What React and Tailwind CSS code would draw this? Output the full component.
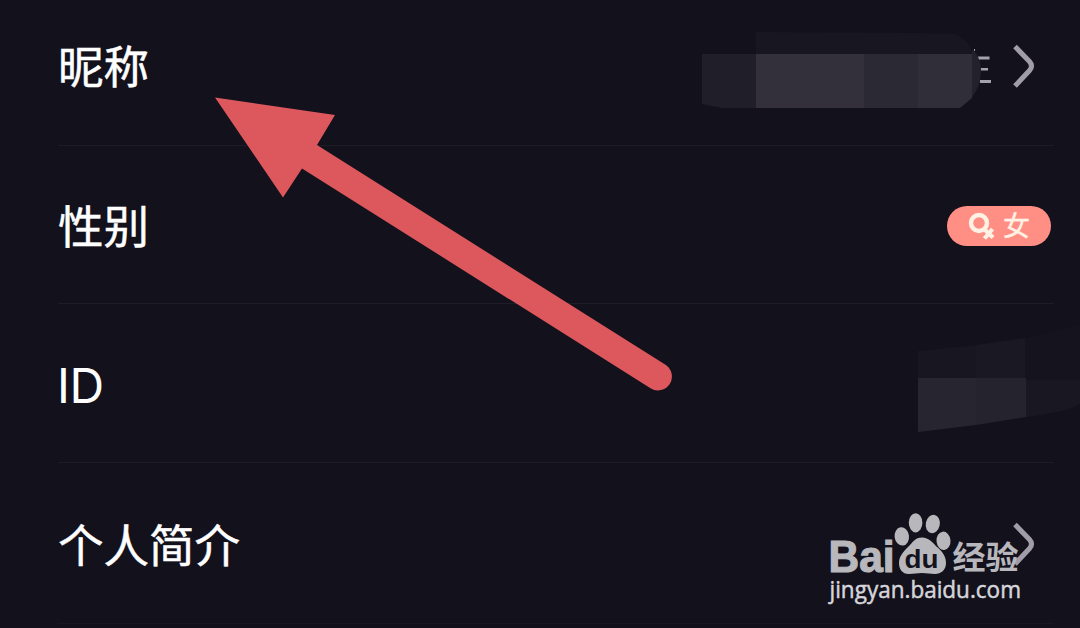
import React from 'react';

const Chevron = () => (
  <svg className="block w-6 h-12 shrink-0" viewBox="0 0 24 48" fill="none">
    <path
      d="M4 3.5L18.5 18.5Q22.5 23 18.5 27.5L4 43"
      stroke="#a09da8"
      strokeWidth="5"
    />
  </svg>
);

// blurred-out nickname, only the last strokes stay readable
const HiddenName = () => (
  <svg className="block w-[296px] h-[78px] shrink-0" viewBox="700 31 296 78">
    <path d="M756 32L918 33L954 34Q968 38 973 54H756Z" fill="#181621" />
    <path d="M702 54H756V108H722L702 104Z" fill="#201f29" />
    <path d="M756 54H864V108H756Z" fill="#33303b" />
    <path d="M864 54H918V108H864Z" fill="#2b2934" />
    <path d="M918 54H972V98L960 108H918Z" fill="#302e38" />
    <path d="M972 50Q981 55 981 72Q980 88 972 97Z" fill="#23212b" />
    <path d="M978 56.5h11.5v3H979zM981 68h7v2.6h-7zM980 80h11v3h-11z" fill="#a5a2ad" />
    <path d="M974 49h1v2h-1z" fill="#a5a2ad" />
  </svg>
);

const HiddenId = () => (
  <svg className="block w-[162px] h-[112px] shrink-0" viewBox="918 322 162 112">
    <path d="M918 351L976 345V378H918Z" fill="#181621" />
    <path d="M976 345L1025 338V378H976Z" fill="#1a1823" />
    <path d="M1025 338L1080 324V380H1025Z" fill="#15131e" />
    <path d="M918 378H976V425L918 432Z" fill="#272530" />
    <path d="M976 378H1026V417L976 425Z" fill="#25232e" />
    <path d="M1026 380H1080V404Q1068 412 1026 417Z" fill="#191721" />
  </svg>
);

const GenderBadge = () => (
  <div className="flex items-center w-[104px] h-10 rounded-full bg-[#ff8e84] pl-[20px] gap-2 text-[#fff1e4]">
    <svg className="block w-7 h-7 shrink-0" viewBox="0 0 28 28" fill="none" stroke="currentColor">
      <circle cx="12" cy="11" r="8" strokeWidth="4.4" />
      <path d="M17 17L26 25.5M25.5 17L17.5 26.5" strokeWidth="4.2" />
    </svg>
    <span className="pb-[3px] text-[27px] leading-[36px] [-webkit-text-stroke:0.4px]">女</span>
  </div>
);

const Row = ({ label, className, children }) => (
  <div className={`flex items-center justify-between ml-[58px] mr-[26px] ${className}`}>
    <span className="pb-[5px] text-[45.5px] leading-[60px] text-white whitespace-nowrap [-webkit-text-stroke:0.5px]">
      {label}
    </span>
    {children}
  </div>
);

const Arrow = () => (
  <svg className="absolute left-0 top-0 w-[1080px] h-[628px]" viewBox="0 0 1080 628">
    <path
      d="M215 97.5L335 115L317 145L665.5 364.8A13.8 13.8 0 0 1 650.5 388.2L302 168.5L283 197.5Z"
      fill="#dd585d"
    />
  </svg>
);

const Watermark = () => (
  <svg
    className="absolute left-[820px] top-[505px] w-[220px] h-[108px]"
    viewBox="820 505 220 108"
    fill="#b8b7bc"
  >
    <text x="828.5" y="572" fontSize="44.5" fontWeight="700" textLength="66" lengthAdjust="spacingAndGlyphs" stroke="#b8b7bc" strokeWidth="1.2" className="font-['Liberation_Sans',sans-serif]">Bai</text>
    <ellipse cx="901.8" cy="536.4" rx="7.2" ry="9.2" transform="rotate(-8 901.8 536.4)" />
    <ellipse cx="915.6" cy="522.8" rx="6.8" ry="9.6" />
    <ellipse cx="932.8" cy="524" rx="7" ry="9.2" transform="rotate(12 932.8 524)" />
    <ellipse cx="943.5" cy="540.8" rx="7" ry="9.2" transform="rotate(-5 943.5 540.8)" />
    <path d="M922 537.5C929 537.5 933 543 937 547C942 551 946 556 946 563C946 570 941 574 935 574C930 574 927 573 922 573C917 573 914 574 909 574C902 574 899 569 899 563C899 556 904 551 908 547C913 542 915 537.5 922 537.5Z" />
    <text x="904.5" y="568" fontSize="26" fontWeight="700" textLength="34" lengthAdjust="spacingAndGlyphs" fill="#14121d" className="font-['Liberation_Sans',sans-serif]">du</text>
    <text x="952.5" y="569" fontSize="32" fontWeight="700" textLength="66" lengthAdjust="spacingAndGlyphs" className="font-['Noto_Sans_CJK_SC',sans-serif]">经验</text>
    <text x="829.5" y="598" fontSize="23" textLength="191.5" lengthAdjust="spacingAndGlyphs" fill="#d6d5da" stroke="#d6d5da" strokeWidth="0.5" className="font-['Open_Sans',sans-serif]">jingyan.baidu.com</text>
  </svg>
);

const App = () => {
  return (
    <div className="relative w-[1080px] h-[628px] overflow-hidden bg-[#13111c] font-['Noto_Sans_CJK_SC',sans-serif]">
      <Row label="昵称" className="h-[146px] pb-3 border-b border-[#1e1c27]">
        <div className="flex items-center gap-[15px] mr-[19px]">
          <div className="pt-[6px]">
            <HiddenName />
          </div>
          <Chevron />
        </div>
      </Row>
      <Row label="性别" className="h-[158px] pt-[3px] border-b border-[#1e1c27]">
        <div className="mr-[3px]">
          <GenderBadge />
        </div>
      </Row>
      <Row
        label={<span className="inline-block font-['Inter',sans-serif] text-[48px] tracking-[-0.5px] -ml-[1px] [-webkit-text-stroke:0]">ID</span>}
        className="h-[159px] pt-2 border-b border-[#1e1c27]"
      >
        <div className="-mr-[26px] -translate-y-[9px]">
          <HiddenId />
        </div>
      </Row>
      <Row label="个人简介" className="h-[161px] pt-1 border-b border-[#191722]">
        <div className="mr-[19px]">
          <Chevron />
        </div>
      </Row>
      <Arrow />
      <Watermark />
    </div>
  );
};

export default App;
